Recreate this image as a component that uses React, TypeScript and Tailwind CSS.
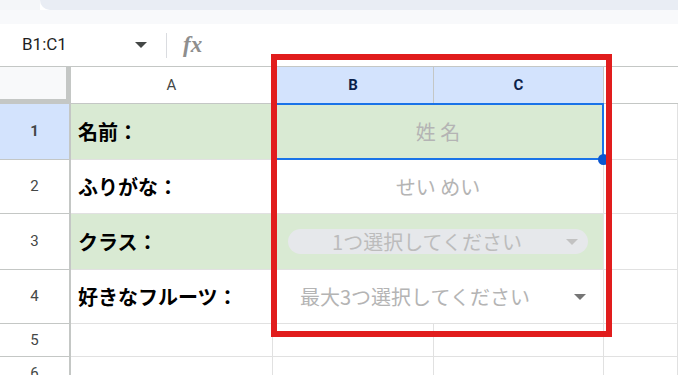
import React from 'react';

const jp = "font-['Noto_Sans_CJK_JP','Noto_Sans',sans-serif]";
const latin = "font-['Roboto','Liberation_Sans',sans-serif]";

function Caret({ color }: { color: string }) {
  return <span className={`inline-block w-0 h-0 border-l-[6px] border-r-[6px] border-t-[6px] border-l-transparent border-r-transparent ${color}`} />;
}

const cell = 'border-r border-b border-[#e1e1e1]';
const rowHead = `flex items-center justify-center border-r-2 border-b border-[#c4c7c5] text-[15px] text-[#444746] ${latin}`;

export default function App() {
  return (
    <div className="relative w-[678px] h-[375px] overflow-hidden bg-white">
      {/* browser / toolbar edge */}
      <div className="flex h-[10px]">
        <div className="w-[40px] bg-[#f4f6f9]" />
        <div className="flex-1 bg-[#e9edf4] rounded-bl-[10px]" />
      </div>
      <div className="h-[14px] bg-[#f8f9fb]" />

      {/* name box + formula bar */}
      <div className="flex items-center h-[43px] border-b border-[#c4c7c5]">
        <span className={`pl-[22px] w-[135px] text-[17px] text-[#1f1f1f] ${latin}`}>B1:C1</span>
        <Caret color="border-t-[#444746]" />
        <span className="ml-[19px] w-px h-[25px] bg-[#dadce0]" />
        <span className="ml-[16px] text-[23px] italic font-bold text-[#8e8e8e] font-['Liberation_Serif',serif]">fx</span>
      </div>

      {/* sheet grid */}
      <div className="grid grid-cols-[71px_202px_161px_170px_1fr] grid-rows-[37px_56px_54px_56px_54px_33px_33px]">
        <div className="bg-[#f8f9fa] border-r-[5px] border-b-[5px] border-[#c4c7c5]" />
        <div className={`flex items-center justify-center border-r border-b border-[#c4c7c5] text-[15px] text-[#444746] ${latin}`}>A</div>
        <div className={`flex items-center justify-center bg-[#d3e3fd] border-r border-b border-[#c4c7c5] text-[15px] font-bold text-[#0b1f4a] ${latin}`}>B</div>
        <div className={`flex items-center justify-center bg-[#d3e3fd] border-r border-b border-[#c4c7c5] text-[15px] font-bold text-[#0b1f4a] ${latin}`}>C</div>
        <div className="border-b border-[#c4c7c5]" />

        {/* row 1 */}
        <div className={`${rowHead} bg-[#d3e3fd] font-bold text-[#0b1f4a]`}>1</div>
        <div className={`${cell} bg-[#d9ead3] flex items-center pl-[7px] text-[20px] font-bold text-black ${jp}`}>名前：</div>
        <div className={`${cell} col-span-2 relative bg-[#d9ead3] flex items-center justify-center text-[20px] text-[#b4b4b4] ${jp}`}>
          姓 名
          <div className="absolute left-[2px] -top-px -right-px -bottom-px border-2 border-[#1a73e8]" />
          <div className="absolute -right-[6px] -bottom-[6px] w-[11px] h-[11px] rounded-full bg-[#0b57d0]" />
        </div>
        <div className={cell} />

        {/* row 2 */}
        <div className={rowHead}>2</div>
        <div className={`${cell} flex items-center pl-[7px] text-[20px] font-bold text-black ${jp}`}>ふりがな：</div>
        <div className={`${cell} col-span-2 flex items-center justify-center text-[20px] text-[#b4b4b4] ${jp}`}>せい めい</div>
        <div className={cell} />

        {/* row 3 */}
        <div className={rowHead}>3</div>
        <div className={`${cell} bg-[#d9ead3] flex items-center pl-[7px] text-[20px] font-bold text-black ${jp}`}>クラス：</div>
        <div className={`${cell} col-span-2 bg-[#d9ead3] flex items-center pl-[15px] pr-[15px]`}>
          <div className="flex items-center w-full h-[25px] rounded-full bg-[#e6e8eb]">
            <span className={`flex-1 text-center text-[20px] leading-none text-[#bcbcbc] ${jp}`}>1つ選択してください</span>
            <span className="mr-[10px] flex"><Caret color="border-t-[#c2c2c2]" /></span>
          </div>
        </div>
        <div className={cell} />

        {/* row 4 */}
        <div className={rowHead}>4</div>
        <div className={`${cell} flex items-center pl-[7px] text-[20px] font-bold text-black ${jp}`}>好きなフルーツ：</div>
        <div className={`${cell} col-span-2 flex items-center pl-[27px] pr-[17px]`}>
          <span className={`flex-1 text-[20px] text-[#b4b4b4] ${jp}`}>最大3つ選択してください</span>
          <Caret color="border-t-[#757575]" />
        </div>
        <div className={cell} />

        {/* row 5 */}
        <div className={rowHead}>5</div>
        <div className={cell} />
        <div className={cell} />
        <div className={cell} />
        <div className={cell} />

        {/* row 6 */}
        <div className={rowHead}>6</div>
        <div className={cell} />
        <div className={cell} />
        <div className={cell} />
        <div className={cell} />
      </div>

      {/* red annotation box */}
      <div className="absolute left-[271px] top-[54px] w-[341px] h-[283px] border-[6px] border-[#e11d1d]" />
    </div>
  );
}
